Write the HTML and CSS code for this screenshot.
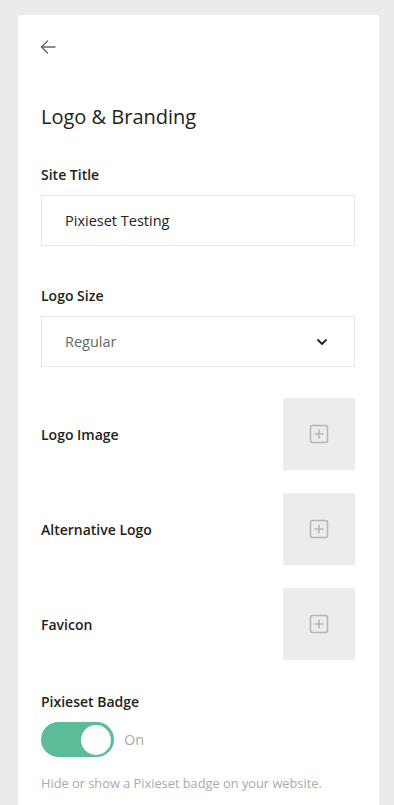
FILE: index.html
```html
<!DOCTYPE html>
<html lang="en">
  <head>
    <meta charset="UTF-8" />
    <meta name="viewport" content="width=device-width, initial-scale=1.0" />
    <title>Logo &amp; Branding</title>
    <link rel="stylesheet" href="styles.css">
  </head>
  <body>
    <main class="panel">
      <button class="tilbage" aria-label="Back">
        <svg width="18" height="18" viewBox="0 0 18 18" fill="none" stroke="#666" stroke-width="1.4" stroke-linecap="round" stroke-linejoin="round">
          <path d="M16 9H2.5" />
          <path d="M8.5 3L2.5 9l6 6" />
        </svg>
      </button>

      <h1 class="overskrift">Logo &amp; Branding</h1>

      <label class="felt-label">Site Title</label>
      <div class="felt">Pixieset Testing</div>

      <label class="felt-label stoerrelse-label">Logo Size</label>
      <div class="felt vaelg">
        <span>Regular</span>
        <svg width="12" height="8" viewBox="0 0 12 8" fill="none" stroke="#222" stroke-width="1.8" stroke-linecap="round" stroke-linejoin="round">
          <path d="M2 2l4 4 4-4" />
        </svg>
      </div>

      <div class="billeder">
        <div class="billed-raekke">
          <span class="raekke-navn">Logo Image</span>
          <div class="upload">
            <svg width="20" height="20" viewBox="0 0 20 20" fill="none" stroke="#b5b5b5" stroke-width="1.5">
              <rect x="1.5" y="1.5" width="17" height="17" rx="2" />
              <path d="M10 5.5v9M5.5 10h9" />
            </svg>
          </div>
        </div>
        <div class="billed-raekke">
          <span class="raekke-navn">Alternative Logo</span>
          <div class="upload">
            <svg width="20" height="20" viewBox="0 0 20 20" fill="none" stroke="#b5b5b5" stroke-width="1.5">
              <rect x="1.5" y="1.5" width="17" height="17" rx="2" />
              <path d="M10 5.5v9M5.5 10h9" />
            </svg>
          </div>
        </div>
        <div class="billed-raekke">
          <span class="raekke-navn">Favicon</span>
          <div class="upload">
            <svg width="20" height="20" viewBox="0 0 20 20" fill="none" stroke="#b5b5b5" stroke-width="1.5">
              <rect x="1.5" y="1.5" width="17" height="17" rx="2" />
              <path d="M10 5.5v9M5.5 10h9" />
            </svg>
          </div>
        </div>
      </div>

      <label class="felt-label badge-label">Pixieset Badge</label>
      <div class="kontakt-raekke">
        <span class="kontakt"><span class="knap"></span></span>
        <span class="kontakt-tekst">On</span>
      </div>
      <p class="hjaelp">Hide or show a Pixieset badge on your website.</p>
    </main>
  </body>
</html>
```

FILE: styles.css
```css
/* ---------GRUND------------*/
* {
  margin: 0;
  padding: 0;
  box-sizing: border-box;
}

body {
  background-color: #ebebeb;
  font-family: "Open Sans", "Lato", sans-serif;
  color: #222;
  overflow: hidden;
  height: 805px;
}

.panel {
  background-color: #fff;
  width: 361px;
  min-height: 820px;
  margin: 15px 0 0 18px;
  padding: 23px 24px 0 23px;
}

.tilbage {
  display: block;
  border: none;
  background: none;
  width: 18px;
  height: 18px;
  margin-left: -2px;
}

.overskrift {
  font-size: 20px;
  font-weight: 400;
  margin-top: 49px;
  line-height: 24px;
}

/* ---------FELTER------------*/

.felt-label {
  display: block;
  font-size: 14px;
  font-weight: 600;
  line-height: 18px;
  margin-top: 37px;
  margin-bottom: 11px;
}

.stoerrelse-label {
  margin-top: 41px;
}

.felt {
  height: 51px;
  border: 1px solid #e6e6e6;
  display: flex;
  align-items: center;
  padding: 0 26px 0 23px;
  font-size: 14.5px;
}

.vaelg {
  justify-content: space-between;
  color: #666;
}

/* ---------BILLEDER------------*/

.billeder {
  margin-top: 31px;
  display: flex;
  flex-direction: column;
  gap: 23px;
}

.billed-raekke {
  display: flex;
  justify-content: space-between;
  align-items: center;
}

.raekke-navn {
  font-size: 14px;
  font-weight: 600;
}

.upload {
  width: 72px;
  height: 72px;
  background-color: #ececec;
  display: flex;
  align-items: center;
  justify-content: center;
}

/* ---------BADGE------------*/

.badge-label {
  margin-top: 33px;
  margin-bottom: 11px;
}

.kontakt-raekke {
  display: flex;
  align-items: center;
  gap: 10px;
}

.kontakt {
  width: 73px;
  height: 35px;
  border-radius: 18px;
  background-color: #5bbd97;
  display: flex;
  align-items: center;
  justify-content: flex-end;
  padding-right: 3px;
}

.knap {
  width: 30px;
  height: 30px;
  border-radius: 50%;
  background-color: #fff;
}

.kontakt-tekst {
  color: #aaa;
  font-size: 14.5px;
}

.hjaelp {
  margin-top: 17px;
  font-size: 12.8px;
  color: #aaa;
}
```
